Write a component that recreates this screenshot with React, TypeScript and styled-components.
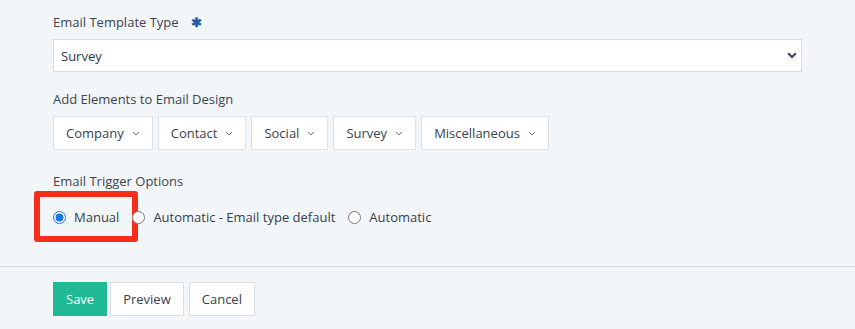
import React from 'react';
import styled, { createGlobalStyle } from 'styled-components';

const GlobalStyle = createGlobalStyle`
  body {
    margin: 0;
    background: #f3f6f9;
    font-family: 'Open Sans', 'Noto Sans', sans-serif;
    color: #35404b;
  }
`;

const Page = styled.div`
  width: 855px;
  height: 329px;
  overflow: hidden;
`;

const Body = styled.div`
  padding: 13px 53px 0;
  height: 267px;
  box-sizing: border-box;
  border-bottom: 1px solid #d5dbe1;
`;

const Label = styled.div<{ $gap?: number }>`
  font-size: 13px;
  line-height: 18px;
  margin-top: ${(p) => p.$gap ?? 0}px;
  margin-bottom: 8px;
  color: #3a4450;
  display: flex;
  align-items: center;
`;

const Required = styled.span`
  color: #1f5fa8;
  font-size: 13px;
  margin-left: 12px;
  font-weight: 700;
`;

const SelectWrap = styled.div`
  position: relative;
  width: 749px;
`;

const Select = styled.select`
  appearance: none;
  width: 100%;
  height: 33px;
  border: 1px solid #d8dde3;
  background: #fff;
  padding: 0 7px;
  font-family: inherit;
  font-size: 13px;
  color: #2c3a4a;
  outline: none;
  border-radius: 0;
`;

const SelectArrow = styled.svg`
  position: absolute;
  right: 5px;
  top: 13px;
  pointer-events: none;
`;

const DropRow = styled.div`
  display: flex;
  gap: 5px;
`;

const DropButton = styled.button`
  height: 34px;
  padding: 0 12px;
  background: #fff;
  border: 1px solid #dde2e7;
  font-family: inherit;
  font-size: 13px;
  color: #37414c;
  display: flex;
  align-items: center;
  gap: 8px;
  cursor: pointer;
`;

const RadioRow = styled.div`
  display: flex;
  align-items: center;
  margin-top: 18px;
  height: 18px;
`;

const RadioOption = styled.label`
  position: relative;
  display: flex;
  align-items: center;
  font-size: 13px;
  color: #35404b;
  margin-right: 13px;
  cursor: pointer;
`;

const Radio = styled.input.attrs({ type: 'radio' })`
  margin: 0 8px 0 0;
  width: 13px;
  height: 13px;
  accent-color: #1a73e8;
`;

const Highlight = styled.span`
  position: absolute;
  left: -19px;
  top: -17px;
  width: 104px;
  height: 51px;
  box-sizing: border-box;
  border: 6px solid #f72d1c;
  border-radius: 3px;
  pointer-events: none;
`;

const Footer = styled.div`
  display: flex;
  gap: 3px;
  padding: 15px 53px 0;
`;

const ActionButton = styled.button<{ $primary?: boolean }>`
  height: 34px;
  padding: 0 12px;
  font-family: inherit;
  font-size: 13px;
  border: 1px solid ${(p) => (p.$primary ? '#1fb994' : '#d8dde3')};
  background: ${(p) => (p.$primary ? '#1fb994' : '#fff')};
  color: ${(p) => (p.$primary ? '#fff' : '#36404b')};
  cursor: pointer;
  &:last-child {
    margin-left: 2px;
  }
`;

function Chevron() {
  return (
    <svg width="8" height="5" viewBox="0 0 8 5" fill="none">
      <path d="M1 1l3 3 3-3" stroke="#6b7580" strokeWidth="1" />
    </svg>
  );
}

const elements = ['Company', 'Contact', 'Social', 'Survey', 'Miscellaneous'];

export default function App() {
  return (
    <Page>
      <GlobalStyle />
      <Body>
        <Label>
          Email Template Type<Required>✱</Required>
        </Label>
        <SelectWrap>
          <Select defaultValue="Survey">
            <option>Survey</option>
            <option>Newsletter</option>
          </Select>
          <SelectArrow width="10" height="7" viewBox="0 0 10 7" fill="none">
            <path d="M1.2 1.2L5 5l3.8-3.8" stroke="#2f4766" strokeWidth="2" />
          </SelectArrow>
        </SelectWrap>

        <Label $gap={18}>Add Elements to Email Design</Label>
        <DropRow>
          {elements.map((name) => (
            <DropButton key={name}>
              {name}
              <Chevron />
            </DropButton>
          ))}
        </DropRow>

        <Label $gap={22}>Email Trigger Options</Label>
        <RadioRow>
          <RadioOption>
            <Radio name="trigger" defaultChecked />
            Manual
            <Highlight />
          </RadioOption>
          <RadioOption>
            <Radio name="trigger" />
            Automatic - Email type default
          </RadioOption>
          <RadioOption>
            <Radio name="trigger" />
            Automatic
          </RadioOption>
        </RadioRow>
      </Body>
      <Footer>
        <ActionButton $primary>Save</ActionButton>
        <ActionButton>Preview</ActionButton>
        <ActionButton>Cancel</ActionButton>
      </Footer>
    </Page>
  );
}
